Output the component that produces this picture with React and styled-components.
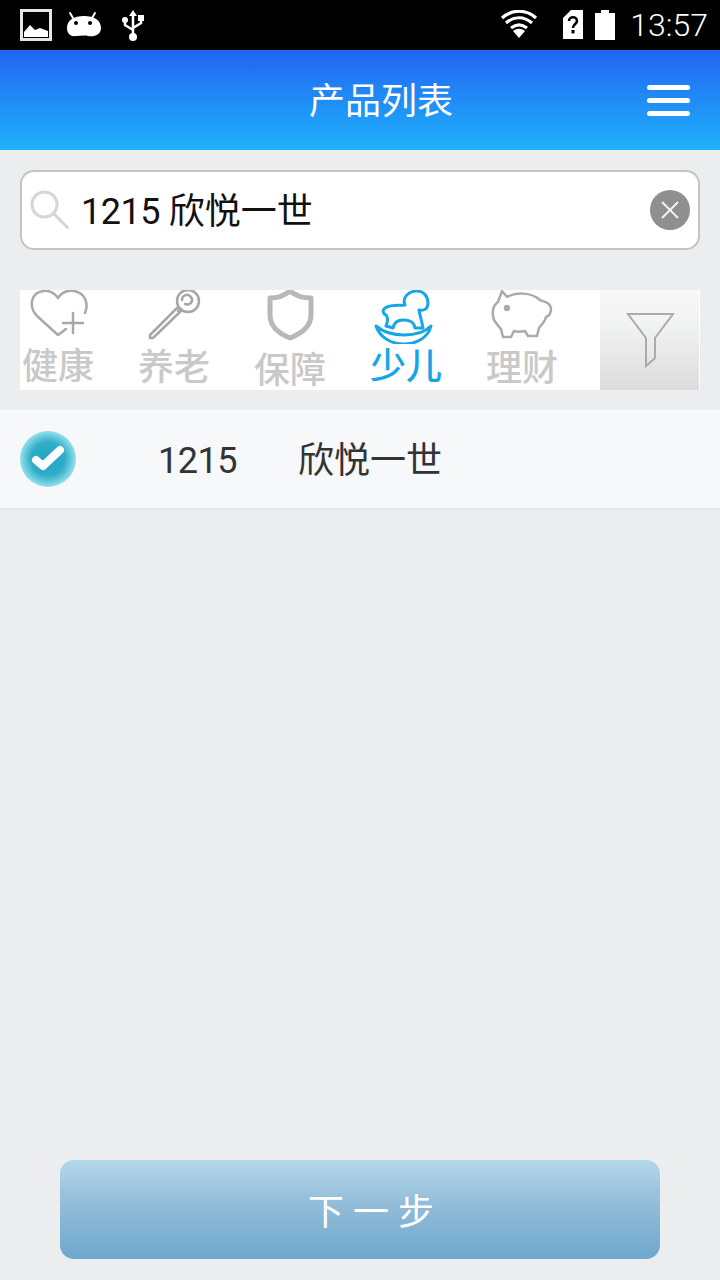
import { createGlobalStyle, styled } from "styled-components";

const GlobalStyle = createGlobalStyle`
  html, body {
    margin: 0;
    padding: 0;
    background: #ebedef;
    font-family: Roboto, "Noto Sans CJK SC", sans-serif;
  }
`;

const Page = styled.div`
  display: flex;
  flex-direction: column;
  width: 720px;
  height: 1280px;
  overflow: hidden;
  background: #ebedef;
`;

// 상태바
const StatusBar = styled.div`
  display: flex;
  align-items: center;
  justify-content: space-between;
  height: 50px;
  padding: 0 12px 0 20px;
  background: #000;
  box-sizing: border-box;
`;

const StatusGroup = styled.div`
  display: flex;
  align-items: center;
  gap: ${(props) => props.$gap}px;
`;

const StatusIcon = styled.svg`
  display: block;
  flex: none;
`;

const Clock = styled.span`
  margin-left: 3px;
  color: #fff;
  font-size: 32px;
  font-weight: 300;
  line-height: 50px;
`;

// 헤더
const Header = styled.header`
  display: flex;
  align-items: center;
  justify-content: space-between;
  height: 100px;
  padding: 0 30px 0 309px;
  box-sizing: border-box;
  background: linear-gradient(180deg, #2165f1 0%, #1fb2fc 100%);
`;

const Title = styled.h1`
  margin: 0;
  padding-top: 3px;
  color: #fff;
  font-size: 36px;
  font-weight: 400;
  line-height: 50px;
`;

const MenuButton = styled.div`
  display: flex;
  flex-direction: column;
  gap: 8px;
  width: 43px;
  padding-top: 1px;
`;

const MenuBar = styled.span`
  display: block;
  height: 5px;
  border-radius: 3px;
  background: #fff;
`;

// 검색창
const SearchBox = styled.div`
  display: flex;
  align-items: center;
  height: 80px;
  margin: 20px 20px 0;
  padding: 0 8px;
  box-sizing: border-box;
  border: 2px solid #c4c5c6;
  border-radius: 14px;
  background: #fff;
`;

const SearchText = styled.span`
  flex: 1;
  margin-left: 11px;
  padding-top: 4px;
  color: #111;
  font-size: 36px;
  line-height: 50px;
`;

const SearchCode = styled.span`
  letter-spacing: -0.5px;
`;

const ClearButton = styled.div`
  display: flex;
  align-items: center;
  justify-content: center;
  width: 40px;
  height: 40px;
  border-radius: 50%;
  background: #8f8f8f;
`;

// 카테고리 탭
const TabBar = styled.nav`
  display: flex;
  gap: 40px;
  height: 100px;
  margin: 40px 20px 0;
  background: #fff;
`;

const Tab = styled.div`
  display: flex;
  flex-direction: column;
  width: 76px;
`;

const TabIcon = styled.svg`
  display: block;
  flex: none;
  fill: none;
  stroke: ${(props) => (props.$active ? "#17a5e5" : props.$shade)};
  stroke-width: ${(props) => props.$weight}px;
  stroke-linejoin: round;
  stroke-linecap: round;
`;

const TabLabel = styled.span`
  padding-top: ${(props) => props.$drop}px;
  color: ${(props) => (props.$active ? "#17a5e5" : "#c9c9c9")};
  font-size: 36px;
  font-weight: 500;
  line-height: 38px;
  text-align: center;
  white-space: nowrap;
`;

const FilterButton = styled.div`
  flex: none;
  width: 99px;
  margin-left: auto;
  margin-right: 1px;
  background: linear-gradient(180deg, #f8f8f8 0%, #f1f2f2 35%, #dcdcdc 100%);
`;

// 상품 목록
const ProductRow = styled.div`
  display: flex;
  align-items: center;
  height: 100px;
  margin-top: 20px;
  padding-left: 20px;
  box-sizing: border-box;
  border-bottom: 2px solid #e4e5e7;
  background: #f7f8fa;
  color: #333;
  font-size: 36px;
`;

const CheckBadge = styled.div`
  display: flex;
  align-items: center;
  justify-content: center;
  width: 56px;
  height: 56px;
  border-radius: 50%;
  background: radial-gradient(circle closest-side, #22a6c2 0%, #30adc8 60%, #93e0ec 100%);
`;

const ProductText = styled.div`
  margin-left: 82px;
  padding-top: 4px;
  line-height: 50px;
`;

const ProductCode = styled.span`
  display: inline-block;
  width: 140px;
  letter-spacing: -0.5px;
`;

const NextButton = styled.button`
  display: block;
  width: 600px;
  height: 99px;
  margin: auto 60px 21px;
  padding: 0 0 2px 22px;
  border: 0;
  border-radius: 14px;
  background: linear-gradient(180deg, #b3d7ea 0%, #92bcd9 45%, #6ea8cc 100%);
  color: #fff;
  font-family: inherit;
  font-size: 36px;
`;

const tabs = [
  {
    label: "健康",
    left: 20,
    drop: 4,
    shade: "#a9a9a9",
    weight: 2.5,
    drawing: (
      <>
        <path d="M66 329 L58 335 L37 316 C28 306 31 292 44 291 C51 290 55 294 58 298 C62 292 68 290 74 291 C85 293 89 303 85 313" />
        <path d="M63 323 H83 M73 313 V333" />
      </>
    ),
  },
  {
    label: "养老",
    left: 136,
    drop: 5,
    shade: "#a6a6a6",
    weight: 2.5,
    drawing: (
      <>
        <path d="M150 335 L177 308 M153 338 L181 311 M150 335 L150 338 L153 338" />
        <circle cx="188" cy="301" r="11" />
        <path d="M181 309 L178 311 M185 304 C190 306 194 301 191 297 C188 293 182 295 182 300" />
      </>
    ),
  },
  {
    label: "保障",
    left: 252,
    drop: 8,
    shade: "#b8b8b8",
    weight: 5,
    drawing: (
      <path d="M270 298 C277 298 285 295 290 291 C295 295 303 298 311 298 L311 315 C311 327 300 334 290 338 C280 334 270 327 270 315 Z" />
    ),
  },
  {
    label: "少儿",
    left: 368,
    drop: 4,
    active: true,
    weight: 3,
    drawing: (
      <>
        <path d="M405 305 C402 298 408 291 417 291 C424 291 428 297 428 303 C428 309 424 311 419 310 C420 316 422 322 423 328 L415 328 C414 321 409 320 403 320 C397 320 394 323 393 328 L386 326 C388 321 388 317 386 315 C383 314 382 310 385 308 C392 304 399 306 405 305 Z" />
        <path d="M376 326 C380 338 392 344 404 344 C416 344 428 338 431 326 C425 332 415 335 404 335 C393 335 383 332 376 326 Z" />
      </>
    ),
  },
  {
    label: "理财",
    left: 484,
    drop: 6,
    shade: "#ababab",
    weight: 2.5,
    drawing: (
      <>
        <path d="M502 291 L507 297 C516 292 531 292 540 300 C545 302 551 303 551 309 C551 313 549 316 546 317 C545 322 541 325 539 328 L537 336 L528 336 L525 331 C520 332 517 332 514 331 L511 337 L503 337 L501 329 C498 326 496 323 494 320 C492 314 492 306 498 302 Z" />
        <circle cx="507" cy="308" r="2" fill="#ababab" />
      </>
    ),
  },
];

export default function App() {
  return (
    <Page>
      <GlobalStyle />
      <StatusBar>
        <StatusGroup $gap={14}>
          <StatusIcon width="32" height="32" viewBox="20 9 32 32">
            <rect x="21.5" y="10.5" width="29" height="29" fill="none" stroke="#e6e6e6" strokeWidth="3" />
            <path d="M24 37 V32 L30 25 L35 30 L40 28 L48 31 V37 Z" fill="#fff" />
          </StatusIcon>
          <StatusIcon width="36" height="28" viewBox="66 11 36 28">
            <path d="M70 13 L73 18 M95 13 L92 18" stroke="#fff" strokeWidth="2" strokeLinecap="round" />
            <path d="M67 28 C67 20 74 16 84 16 C94 16 101 20 101 28 C101 35 94 37 88 36 C85 35 80 36 76 36 C70 37 67 33 67 28 Z" fill="#fff" />
            <circle cx="76" cy="23" r="2" fill="#000" />
            <circle cx="90" cy="23" r="2" fill="#000" />
          </StatusIcon>
          <StatusIcon width="34" height="34" viewBox="116 8 34 34">
            <path d="M133 10 L137 16 H129 Z" fill="#fff" />
            <path d="M133 14 V36 M125 21 V25 L133 30 M141 19 V23 L133 28" fill="none" stroke="#fff" strokeWidth="2.5" />
            <circle cx="125" cy="20" r="3" fill="#fff" />
            <rect x="138" y="15" width="6" height="6" fill="#fff" />
            <circle cx="133" cy="37" r="4" fill="#fff" />
          </StatusIcon>
        </StatusGroup>
        <StatusGroup $gap={12}>
          <StatusIcon width="51" height="30" viewBox="499 11 51 30">
            <path d="M501 19 C511 10 525 10 535 19 M505 24 C513 17 523 17 531 24 M510 29 C515 25 521 25 526 29" fill="none" stroke="#fff" strokeWidth="3.2" />
            <path d="M512 32 C516 29 520 29 524 32 L518 39 Z" fill="#fff" />
          </StatusIcon>
          <StatusIcon width="20" height="30" viewBox="562 11 20 30">
            <path d="M570 11 H582 V40 H562 V19 Z" fill="#fff" />
            <path d="M568 22 C568 17 576 17 576 22 C576 25 572 25 572 29" fill="none" stroke="#000" strokeWidth="2.6" />
            <rect x="570.5" y="31" width="3" height="3.4" fill="#000" />
          </StatusIcon>
          <StatusIcon width="20" height="31" viewBox="594 10 20 31">
            <path d="M600 10 H608 V13 H614 V40 H594 V13 H600 Z" fill="#fff" />
          </StatusIcon>
          <Clock>13:57</Clock>
        </StatusGroup>
      </StatusBar>

      <Header>
        <Title>产品列表</Title>
        <MenuButton>
          <MenuBar />
          <MenuBar />
          <MenuBar />
        </MenuButton>
      </Header>

      <SearchBox>
        <svg width="40" height="40" viewBox="30 190 40 40" fill="none" stroke="#d5d5d5" strokeWidth="3" strokeLinecap="round">
          <circle cx="44.5" cy="204.5" r="12.5" />
          <path d="M54 214 L67.5 227.5" />
        </svg>
        <SearchText>
          <SearchCode>1215</SearchCode> 欣悦一世
        </SearchText>
        <ClearButton>
          <svg width="20" height="20" viewBox="0 0 20 20" stroke="#f2f2f2" strokeWidth="2">
            <path d="M2 2 L18 18 M18 2 L2 18" />
          </svg>
        </ClearButton>
      </SearchBox>

      <TabBar>
        {tabs.map((tab) => (
          <Tab key={tab.label}>
            <TabIcon
              width="76"
              height="54"
              viewBox={`${tab.left} 290 76 54`}
              $active={tab.active}
              $shade={tab.shade}
              $weight={tab.weight}
            >
              {tab.drawing}
            </TabIcon>
            <TabLabel $active={tab.active} $drop={tab.drop}>
              {tab.label}
            </TabLabel>
          </Tab>
        ))}
        <FilterButton>
          <svg width="99" height="100" viewBox="600 290 99 100" fill="none" stroke="#ababab" strokeWidth="2">
            <path d="M628 314 H673 L655 338 V358 L646 366 V338 Z" />
          </svg>
        </FilterButton>
      </TabBar>

      <ProductRow>
        <CheckBadge>
          <svg width="56" height="56" viewBox="20 431 56 56" fill="none" stroke="#fff" strokeWidth="8" strokeLinecap="round" strokeLinejoin="round">
            <path d="M36 460 L43 466 L60 450" />
          </svg>
        </CheckBadge>
        <ProductText>
          <ProductCode>1215</ProductCode>欣悦一世
        </ProductText>
      </ProductRow>

      <NextButton>下 一 步</NextButton>
    </Page>
  );
}
